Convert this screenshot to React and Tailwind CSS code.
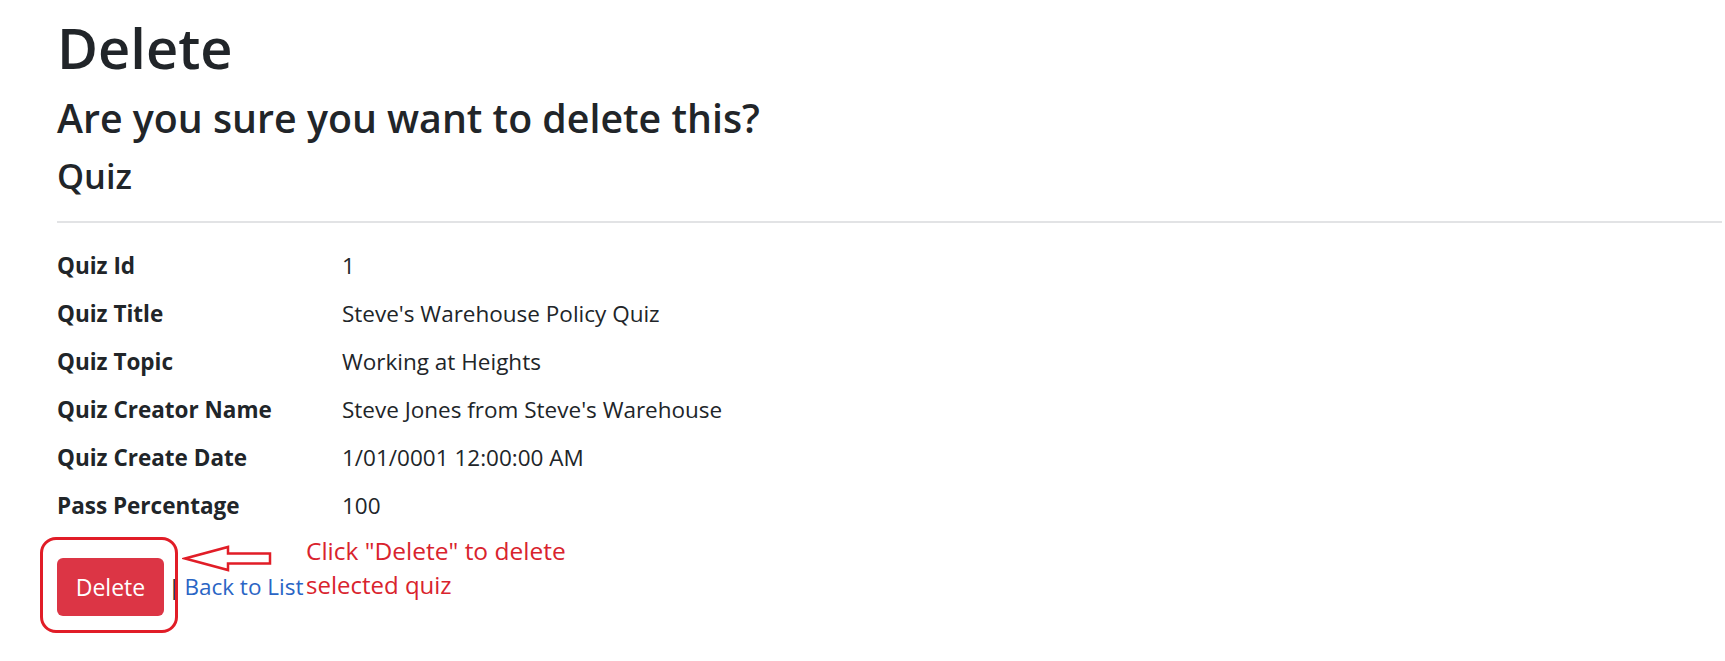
import React from "react";

const rows = [
  ["Quiz Id", "1"],
  ["Quiz Title", "Steve's Warehouse Policy Quiz"],
  ["Quiz Topic", "Working at Heights"],
  ["Quiz Creator Name", "Steve Jones from Steve's Warehouse"],
  ["Quiz Create Date", "1/01/0001 12:00:00 AM"],
  ["Pass Percentage", "100"],
];

export default function App() {
  return (
    <div className="relative w-[1725px] h-[661px] overflow-hidden bg-white font-['Open_Sans','Noto_Sans',sans-serif] text-[#212529]">
      <div className="pl-[57px] pt-[12px]">
        <h1 className="text-[56px] font-semibold leading-[71px] mb-[10px]">Delete</h1>
        <h3 className="text-[39.3px] font-semibold leading-[50px] mb-[11px]">
          Are you sure you want to delete this?
        </h3>
        <h4 className="text-[34.4px] font-semibold leading-[43px] mb-[24px]">Quiz</h4>
        <div className="h-[2px] bg-[#e2e3e5] mr-[3px] mb-[25px]" />
        <dl className="grid grid-cols-[285px_1fr] text-[22.5px] leading-[36px]">
          {rows.map(([k, v]) => (
            <React.Fragment key={k}>
              <dt className="font-bold mb-[12px]">{k}</dt>
              <dd className="mb-[12px]">{v}</dd>
            </React.Fragment>
          ))}
        </dl>
        <div className="mt-[22px] flex items-center h-[58px] text-[22.5px] leading-[36px]">
          <button className="h-[58px] w-[107px] rounded-[6px] bg-[#dc3545] text-white text-[23px] leading-[36px]">
            Delete
          </button>
          <span className="ml-[4px]">|</span>
          <a href="#" className="ml-[4px] text-[#2a65c5]">Back to List</a>
        </div>
      </div>

      {/* annotation overlay */}
      <div className="absolute left-[40px] top-[537px] w-[138px] h-[96px] border-[3.5px] border-[#e11d27] rounded-[16px]" />
      <svg className="absolute left-[182px] top-[544px]" width="92" height="30" viewBox="0 0 92 30">
        <polygon
          points="3,14.5 46,3 46,9.5 88,9.5 88,19.5 46,19.5 46,26"
          fill="none"
          stroke="#e11d27"
          strokeWidth="2.5"
          strokeLinejoin="miter"
        />
      </svg>
      <div className="absolute left-[306px] top-[534px] text-[24px] leading-[34px] text-[#d9232d]">
        <div className="text-[24.5px]">Click "Delete" to delete</div>
        <div>selected quiz</div>
      </div>
    </div>
  );
}
